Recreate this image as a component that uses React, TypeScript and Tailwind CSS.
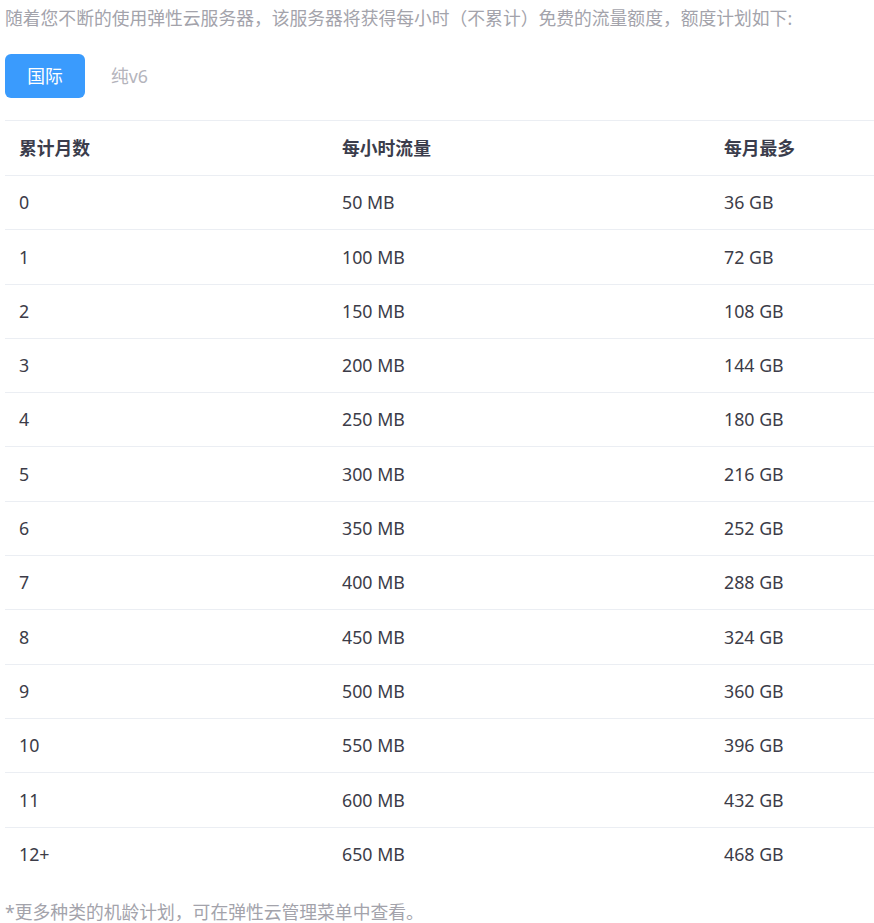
const rows = [
  ['0', '50 MB', '36 GB'],
  ['1', '100 MB', '72 GB'],
  ['2', '150 MB', '108 GB'],
  ['3', '200 MB', '144 GB'],
  ['4', '250 MB', '180 GB'],
  ['5', '300 MB', '216 GB'],
  ['6', '350 MB', '252 GB'],
  ['7', '400 MB', '288 GB'],
  ['8', '450 MB', '324 GB'],
  ['9', '500 MB', '360 GB'],
  ['10', '550 MB', '396 GB'],
  ['11', '600 MB', '432 GB'],
  ['12+', '650 MB', '468 GB'],
]

export default function App() {
  return (
    <div className="w-[874px] bg-white pl-[5px] font-['Noto_Sans','Noto_Sans_CJK_SC',sans-serif] text-[17.8px]">
      <p className="m-0 pt-[5px] leading-[26px] text-[#a3a3ab]">
        随着您不断的使用弹性云服务器，该服务器将获得每小时（不累计）免费的流量额度，额度计划如下:
      </p>

      <div className="mt-[23px] flex items-center gap-[26px]">
        <button type="button" className="h-[44px] w-[80px] rounded-[6px] bg-[#3a9bfd] text-white">
          国际
        </button>
        <button type="button" className="text-[#b4b4bc]">纯v6</button>
      </div>

      <table className="mt-[22px] w-[869px] table-fixed border-collapse text-left">
        <colgroup>
          <col className="w-[323px]" />
          <col className="w-[382px]" />
          <col />
        </colgroup>
        <thead>
          <tr className="h-[55px] border-y border-[#ebeef3]">
            <th className="pl-[14px] font-bold text-[#3b3d4c]">累计月数</th>
            <th className="pl-[14px] font-bold text-[#3b3d4c]">每小时流量</th>
            <th className="pl-[14px] font-bold text-[#3b3d4c]">每月最多</th>
          </tr>
        </thead>
        <tbody>
          {rows.map((row, i) => (
            <tr key={row[0]} className={`h-[54.3px] ${i < rows.length - 1 ? 'border-b border-[#ebeef3]' : ''}`}>
              {row.map((cell, j) => (
                <td key={j} className="pl-[14px] text-[#3c3c48]">
                  {cell}
                </td>
              ))}
            </tr>
          ))}
        </tbody>
      </table>

      <p className="m-0 pt-[18px] leading-[26px] text-[#a3a3ab]">*更多种类的机龄计划，可在弹性云管理菜单中查看。</p>
    </div>
  )
}
